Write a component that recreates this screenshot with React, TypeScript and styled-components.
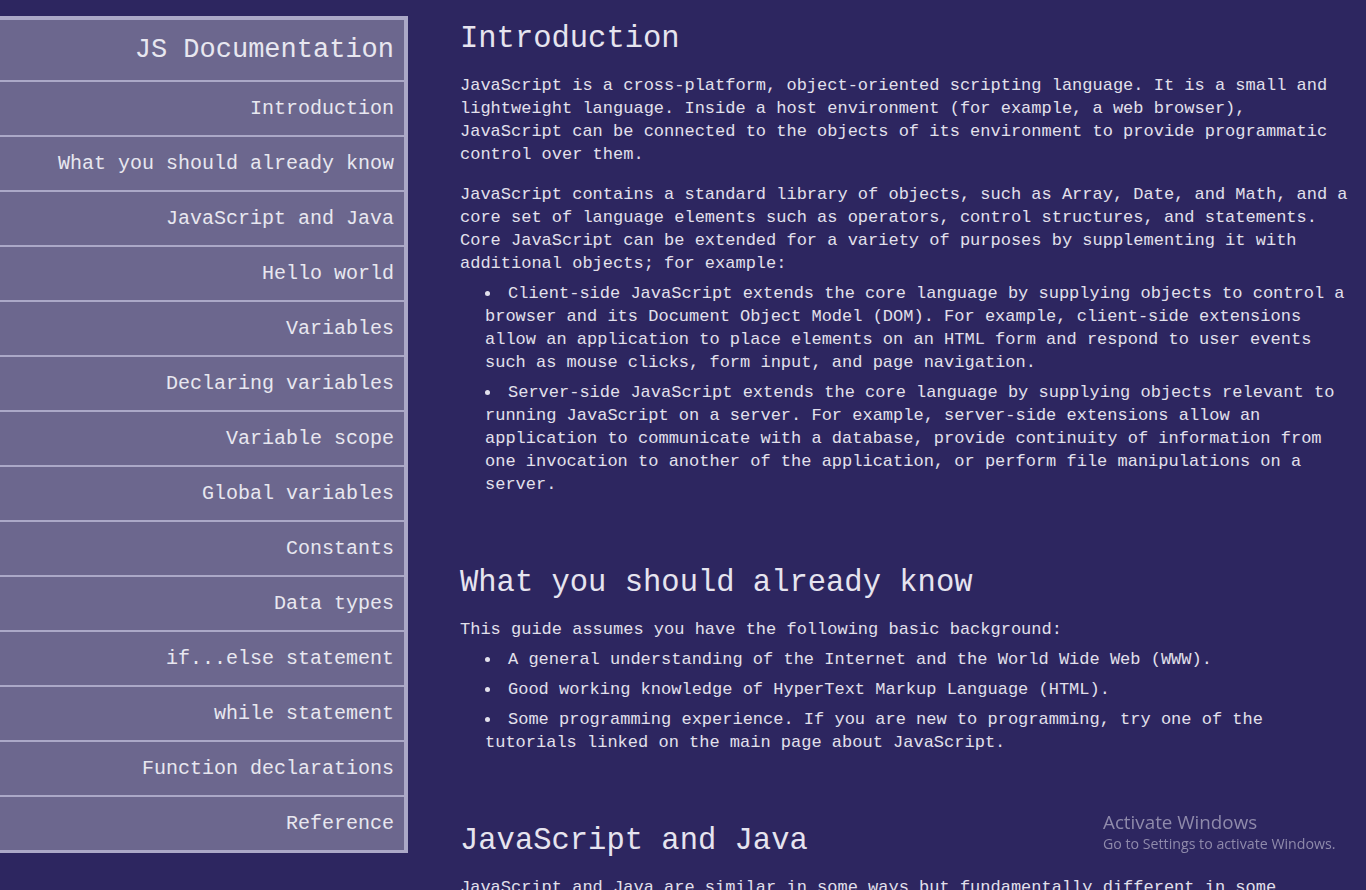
import React from "react";
import styled, { createGlobalStyle } from "styled-components";

const GlobalStyle = createGlobalStyle`
  html, body {
    margin: 0;
    padding: 0;
    background: #2d2660;
  }
  body {
    font-family: "Liberation Mono", "Courier New", monospace;
    color: #e2e0ec;
  }
  * { box-sizing: border-box; }
`;

const Page = styled.div`
  display: flex;
  align-items: flex-start;
  min-height: 100vh;
  background: #2d2660;
`;

const Nav = styled.nav`
  flex: 0 0 408px;
  width: 408px;
  margin-top: 16px;
  background: #6c678e;
  border-top: 4px solid #aba8c7;
  border-right: 4px solid #aba8c7;
  border-bottom: 3px solid #aba8c7;
  display: flex;
  flex-direction: column;
`;

const NavHeader = styled.header`
  height: 60px;
  display: flex;
  align-items: center;
  justify-content: flex-end;
  padding-right: 10px;
  font-size: 27px;
  color: #e8e7f0;
`;

const NavLink = styled.a`
  height: 55px;
  border-top: 2px solid #aba8c7;
  display: flex;
  align-items: center;
  justify-content: flex-end;
  padding-right: 10px;
  font-size: 20px;
  color: #e8e7f0;
  text-decoration: none;
`;

const Main = styled.main`
  flex: 0 0 896px;
  width: 896px;
  margin-left: 52px;
  padding-top: 21px;
`;

const Section = styled.section`
  & + & {
    margin-top: 69px;
  }
`;

const Heading = styled.h2`
  margin: 0 0 17px;
  font-size: 30.5px;
  line-height: 36px;
  font-weight: normal;
  color: #e6e4ef;
`;

const Para = styled.p`
  margin: 0;
  font-size: 17px;
  line-height: 23px;
  & + & {
    margin-top: 17px;
  }
`;

const List = styled.ul`
  margin: 7px 0 0;
  padding-left: 25px;
  list-style-position: inside;
`;

const Item = styled.li`
  font-size: 17px;
  line-height: 23px;
  & + & {
    margin-top: 7px;
  }
`;

const Watermark = styled.div`
  position: fixed;
  left: 1103px;
  top: 810px;
  font-family: "Open Sans", "Noto Sans", sans-serif;
  color: #8f8aab;
  pointer-events: none;
`;

const WmTitle = styled.div`
  font-size: 18.8px;
  line-height: 24px;
`;

const WmSub = styled.div`
  font-size: 14.2px;
  line-height: 20px;
`;

const navItems = [
  "Introduction",
  "What you should already know",
  "JavaScript and Java",
  "Hello world",
  "Variables",
  "Declaring variables",
  "Variable scope",
  "Global variables",
  "Constants",
  "Data types",
  "if...else statement",
  "while statement",
  "Function declarations",
  "Reference",
];

export default function App() {
  return (
    <>
      <GlobalStyle />
      <Page>
        <Nav id="navbar">
          <NavHeader>JS Documentation</NavHeader>
          {navItems.map((n) => (
            <NavLink key={n} href={"#" + n.replace(/ /g, "_")}>
              {n}
            </NavLink>
          ))}
        </Nav>
        <Main id="main-doc">
          <Section id="Introduction">
            <Heading>Introduction</Heading>
            <Para>
              JavaScript is a cross-platform, object-oriented scripting language. It is a small and
              lightweight language. Inside a host environment (for example, a web browser),
              JavaScript can be connected to the objects of its environment to provide programmatic
              control over them.
            </Para>
            <Para>
              JavaScript contains a standard library of objects, such as Array, Date, and Math, and a
              core set of language elements such as operators, control structures, and statements.
              Core JavaScript can be extended for a variety of purposes by supplementing it with
              additional objects; for example:
            </Para>
            <List>
              <Item>
                Client-side JavaScript extends the core language by supplying objects to control a
                browser and its Document Object Model (DOM). For example, client-side extensions
                allow an application to place elements on an HTML form and respond to user events
                such as mouse clicks, form input, and page navigation.
              </Item>
              <Item>
                Server-side JavaScript extends the core language by supplying objects relevant to
                running JavaScript on a server. For example, server-side extensions allow an
                application to communicate with a database, provide continuity of information from
                one invocation to another of the application, or perform file manipulations on a
                server.
              </Item>
            </List>
          </Section>
          <Section id="What_you_should_already_know">
            <Heading>What you should already know</Heading>
            <Para>This guide assumes you have the following basic background:</Para>
            <List>
              <Item>A general understanding of the Internet and the World Wide Web (WWW).</Item>
              <Item>Good working knowledge of HyperText Markup Language (HTML).</Item>
              <Item>
                Some programming experience. If you are new to programming, try one of the
                tutorials linked on the main page about JavaScript.
              </Item>
            </List>
          </Section>
          <Section id="JavaScript_and_Java">
            <Heading>JavaScript and Java</Heading>
            <Para>
              JavaScript and Java are similar in some ways but fundamentally different in some
              others. The JavaScript language resembles Java but does not have Java's static typing
              and strong type checking. JavaScript follows most Java expression syntax, naming
              conventions and basic control-flow constructs which was the reason why it was renamed
              from LiveScript to JavaScript.
            </Para>
          </Section>
        </Main>
      </Page>
      <Watermark>
        <WmTitle>Activate Windows</WmTitle>
        <WmSub>Go to Settings to activate Windows.</WmSub>
      </Watermark>
    </>
  );
}
